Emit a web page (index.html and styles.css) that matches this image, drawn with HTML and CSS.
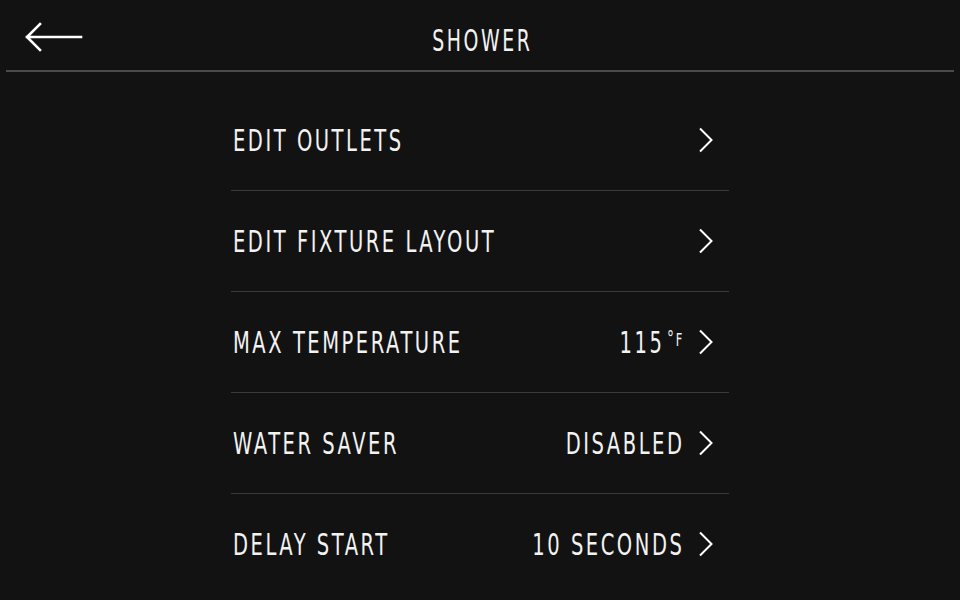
FILE: index.html
```html
<!DOCTYPE html>
<html>
<head>
<meta charset="utf-8">
<link rel="stylesheet" href="styles.css">
</head>
<body>
<div class="screen">
  <header class="topbar">
    <button class="back" aria-label="Back">
      <svg width="60" height="32" viewBox="0 0 60 32"><path d="M57 15H3M16 2L3 15L16 28" fill="none" stroke="#fff" stroke-width="2.6" stroke-linecap="square"/></svg>
    </button>
    <h1 class="title"><span class="narrow">SHOWER</span></h1>
  </header>
  <ul class="list">
    <li class="row"><span class="label narrow">EDIT OUTLETS</span><span class="right"><svg class="chev" width="16" height="28" viewBox="0 0 16 28"><path d="M2 2.5L13.5 14L2 25.5" fill="none" stroke="#fff" stroke-width="2"/></svg></span></li>
    <li class="row"><span class="label narrow">EDIT FIXTURE LAYOUT</span><span class="right"><svg class="chev" width="16" height="28" viewBox="0 0 16 28"><path d="M2 2.5L13.5 14L2 25.5" fill="none" stroke="#fff" stroke-width="2"/></svg></span></li>
    <li class="row"><span class="label narrow">MAX TEMPERATURE</span><span class="right"><span class="value"><span class="narrow">115<sup class="unit"><span class="deg">°</span>F</sup></span></span><svg class="chev" width="16" height="28" viewBox="0 0 16 28"><path d="M2 2.5L13.5 14L2 25.5" fill="none" stroke="#fff" stroke-width="2"/></svg></span></li>
    <li class="row"><span class="label narrow">WATER SAVER</span><span class="right"><span class="value"><span class="narrow">DISABLED</span></span><svg class="chev" width="16" height="28" viewBox="0 0 16 28"><path d="M2 2.5L13.5 14L2 25.5" fill="none" stroke="#fff" stroke-width="2"/></svg></span></li>
    <li class="row"><span class="label narrow">DELAY START</span><span class="right"><span class="value"><span class="narrow">10 SECONDS</span></span><svg class="chev" width="16" height="28" viewBox="0 0 16 28"><path d="M2 2.5L13.5 14L2 25.5" fill="none" stroke="#fff" stroke-width="2"/></svg></span></li>
  </ul>
</div>
</body>
</html>
```
FILE: styles.css
```css
html, body {
  margin: 0;
  padding: 0;
  background: #121212;
  overflow: hidden;
}
.screen {
  width: 960px;
  height: 600px;
  background: #121212;
  color: #f2f2f2;
  font-family: "DejaVu Sans", sans-serif;
}
.narrow {
  display: inline-block;
  transform: scaleX(0.63);
  transform-origin: left center;
  white-space: nowrap;
}
.topbar {
  position: relative;
  height: 70px;
  margin: 0 6px;
  border-bottom: 2px solid #4a4a4a;
  display: flex;
  align-items: center;
  justify-content: center;
}
.back {
  position: absolute;
  left: 18px;
  top: 22px;
  background: none;
  border: 0;
  padding: 0;
  line-height: 0;
}
.title {
  margin: 0;
  padding-top: 12px;
  padding-left: 4px;
  font-size: 30px;
  font-weight: normal;
  letter-spacing: 4px;
  line-height: 1;
}
.title .narrow {
  transform-origin: center center;
}
.list {
  list-style: none;
  margin: 18px auto 0;
  padding: 0;
  width: 498px;
}
.row {
  height: 100px;
  border-bottom: 1px solid #3a3a3a;
  display: flex;
  align-items: center;
  justify-content: space-between;
  padding: 0 15px 0 2px;
  font-size: 31px;
  letter-spacing: 4px;
  line-height: 1;
}
.row:last-child {
  border-bottom: 0;
}
.right {
  display: flex;
  align-items: center;
  gap: 14px;
}
.value {
  width: 0;
  display: flex;
  justify-content: flex-end;
}
.value .narrow {
  transform-origin: right center;
  flex: none;
}
.unit {
  font-size: 18px;
  letter-spacing: 2px;
  vertical-align: 7px;
  margin-left: 4px;
}
.deg {
  font-size: 22px;
  letter-spacing: 3px;
}
.chev {
  display: block;
}
```
